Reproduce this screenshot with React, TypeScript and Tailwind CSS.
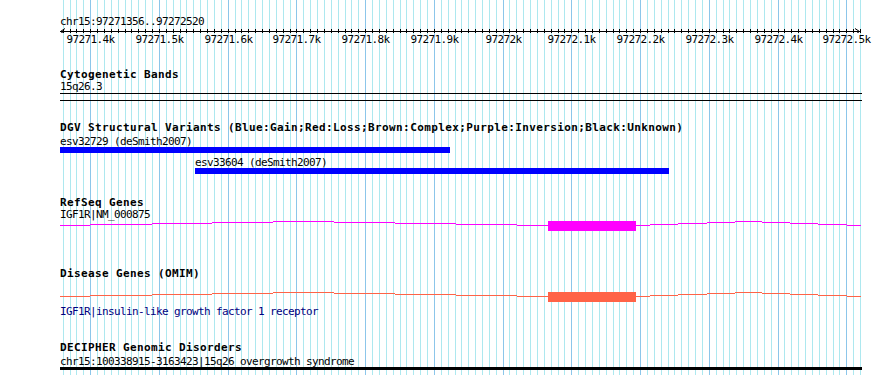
import React from "react";

// genome window shown in the browser image
const START = 97271356;
const END = 97272520;
const LEFT = 60;
const WIDTH = 800;
const toX = (bp: number) => LEFT + ((bp - START) * WIDTH) / (END - START);

const gridBps: number[] = [];
for (let bp = Math.ceil(START / 10) * 10; bp <= END; bp += 10) gridBps.push(bp);
const majorBps = gridBps.filter((bp) => bp % 100 === 0);

const kLabel = (bp: number) => {
  const k = Math.floor(bp / 1000);
  const d = (bp % 1000) / 100;
  return d === 0 ? `${k}k` : `${k}.${d}k`;
};

// stepped intron line: [from x, to x, row offset]
const intronSteps: [number, number, number][] = [
  [60, 90, 5], [90, 152, 4], [152, 212, 3], [212, 273, 2], [273, 334, 1],
  [334, 395, 2], [395, 456, 3], [456, 517, 4], [517, 548, 5],
  [636, 650, 5], [650, 678, 4], [678, 707, 3], [707, 735, 2], [735, 762, 1],
  [762, 790, 2], [790, 818, 3], [818, 847, 4], [847, 861, 5],
];

function Title({ children }: { children: React.ReactNode }) {
  return <div className="h-[12px] leading-[14px] text-[11px] font-bold tracking-[0.38px] whitespace-nowrap text-black">{children}</div>;
}

function Item({ children, className = "" }: { children: React.ReactNode; className?: string }) {
  return <div className={`h-[12px] leading-[14px] text-[11px] tracking-[-0.62px] whitespace-nowrap ${className}`}>{children}</div>;
}

function GeneTrack({ color }: { color: string }) {
  return (
    <svg width={802} height={12} className="block">
      {intronSteps.map(([a, b, r], i) => (
        <rect key={i} x={a - LEFT} y={r} width={b - a} height={1} fill={color} />
      ))}
      <rect x={548 - LEFT} y={1} width={88} height={10} fill={color} />
    </svg>
  );
}

export default function App() {
  return (
    <div className="relative w-[890px] h-[375px] bg-white overflow-hidden font-['DejaVu_Sans_Mono',monospace] text-black">
      {/* guide lines */}
      <svg width={890} height={375} className="absolute inset-0">
        {gridBps.map((bp) => (
          <rect
            key={bp}
            x={Math.round(toX(bp))}
            y={0}
            width={1}
            height={375}
            fill={bp % 100 === 0 ? "#8cc6ea" : "#ade8ef"}
          />
        ))}
      </svg>

      <div className="relative flex flex-col pl-[60px]">
        {/* ================== Ruler ================== */}
        <Item className="mt-[15px]">chr15:97271356..97272520</Item>
        <svg width={804} height={6} className="block">
          <rect x={0} y={4} width={800} height={1} fill="#000" />
          {gridBps.map((bp) => (
            <rect key={bp} x={Math.round(toX(bp)) - LEFT} y={2} width={1} height={5} fill="#000" />
          ))}
          <polyline points="5,1.5 0.5,4.5 5,7.5" fill="none" stroke="#000" strokeWidth={1} />
          <polyline points="795,1.5 799.5,4.5 795,7.5" fill="none" stroke="#000" strokeWidth={1} />
        </svg>
        <div className="relative h-[12px]">
          {majorBps.map((bp) => (
            <span
              key={bp}
              className="absolute top-0 -translate-x-1/2 leading-[14px] text-[11px] tracking-[-0.62px] whitespace-nowrap"
              style={{ left: Math.round(toX(bp)) - LEFT + 0.5 }}
            >
              {kLabel(bp)}
            </span>
          ))}
        </div>

        {/* ================== Cytogenetic Bands ================== */}
        <div className="mt-[23px]">
          <Title>Cytogenetic Bands</Title>
        </div>
        <Item>15q26.3</Item>
        <div className="mt-[1px] h-px w-[802px] bg-black" />
        <div className="mt-[6px] h-px w-[802px] bg-black" />

        {/* ================== DGV ================== */}
        <div className="mt-[20px]">
          <Title>DGV Structural Variants (Blue:Gain;Red:Loss;Brown:Complex;Purple:Inversion;Black:Unknown)</Title>
        </div>
        <Item className="mt-[2px]">esv32729 (deSmith2007)</Item>
        <div className="h-[6px] w-[390px] bg-[#0000ff]" />
        <Item className="mt-[3px] ml-[135px]">esv33604 (deSmith2007)</Item>
        <div className="ml-[135px] h-[6px] w-[474px] bg-[#0000ff]" />

        {/* ================== RefSeq ================== */}
        <div className="mt-[22px]">
          <Title>RefSeq Genes</Title>
        </div>
        <Item>IGF1R|NM_000875</Item>
        <GeneTrack color="#ff00ff" />

        {/* ================== OMIM ================== */}
        <div className="mt-[35px]">
          <Title>Disease Genes (OMIM)</Title>
        </div>
        <div className="mt-[12px]">
          <GeneTrack color="#ff6347" />
        </div>
        <Item className="mt-[2px] text-[#000080]">IGF1R|insulin-like growth factor 1 receptor</Item>

        {/* ================== DECIPHER ================== */}
        <div className="mt-[24px]">
          <Title>DECIPHER Genomic Disorders</Title>
        </div>
        <Item className="mt-[2px]">chr15:100338915-3163423|15q26 overgrowth syndrome</Item>
        <div className="h-[3px] w-[802px] bg-black" />
      </div>
    </div>
  );
}
